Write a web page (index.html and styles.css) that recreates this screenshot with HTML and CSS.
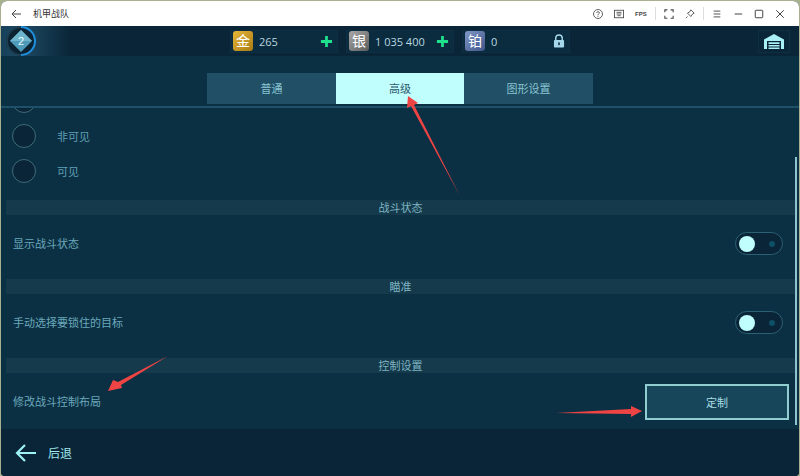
FILE: index.html
```html
<!DOCTYPE html>
<html lang="zh">
<head>
    <meta charset="UTF-8">
    <title>机甲战队</title>
    <link rel="stylesheet" href="styles.css">
</head>
<body>
    <div class="window">
        <header class="titlebar">
            <svg class="ico back" width="10" height="10" viewBox="0 0 10 10"><path d="M10 5H1M5 1 1 5l4 4" fill="none" stroke="#444" stroke-width="1"/></svg>
            <span class="title">机甲战队</span>
            <div class="win-tools">
                <svg class="ico" width="10" height="10" viewBox="0 0 12 12"><circle cx="6" cy="6" r="5.400" fill="none" stroke="#444"/><path d="M4.300 4.600C4.400 2.800 7.700 2.800 7.700 4.600 7.700 5.800 6 5.700 6 7.400M6 8.200v1.200" fill="none" stroke="#444"/></svg>
                <svg class="ico" width="10" height="10" viewBox="0 0 12 12"><rect x="0.500" y="1.500" width="11" height="9" fill="none" stroke="#444"/><path d="M3 4h6M3 6h6M4 8h4" stroke="#444"/></svg>
                <span class="fps">FPS</span>
                <i class="sep"></i>
                <svg class="ico" width="10" height="10" viewBox="0 0 12 12"><path d="M1 4V1h3M8 1h3v3M11 8v3H8M4 11H1V8" fill="none" stroke="#444" stroke-width="1.300"/></svg>
                <svg class="ico" width="10" height="10" viewBox="0 0 12 12"><path d="M7 1l4 4-2 1-2 3-4-4 3-2zM3 9l-2 2" fill="none" stroke="#444"/></svg>
                <i class="sep"></i>
                <svg class="ico" width="10" height="10" viewBox="0 0 12 12"><path d="M2 2.500h8M2 6h8M2 9.500h8" stroke="#444" stroke-width="1.100"/></svg>
                <svg class="ico" width="10" height="10" viewBox="0 0 12 12"><path d="M2 6h9" stroke="#444" stroke-width="1.200"/></svg>
                <svg class="ico" width="10" height="10" viewBox="0 0 12 12"><rect x="1.500" y="1.500" width="9" height="9" rx="1" fill="none" stroke="#444" stroke-width="1.200"/></svg>
                <svg class="ico" width="10" height="10" viewBox="0 0 12 12"><path d="M1.500 1.500l9 9M10.500 1.500l-9 9" stroke="#444" stroke-width="1.200"/></svg>
            </div>
        </header>

        <div class="topbar">
            <div class="level">
                <svg width="32" height="32" viewBox="0 0 32 32">
                    <circle cx="16" cy="16" r="14" fill="#0a2232" stroke="#1c3c50" stroke-width="2"/>
                    <path d="M16 2a14 14 0 0 1 0 28" fill="none" stroke="#1f8fe0" stroke-width="2"/>
                    <path d="M16 5 27 16 16 27 5 16z" fill="#4e9ab8"/>
                    <path d="M16 5 27 16H5z" fill="#6db4cc"/>
                </svg>
                <span class="level-num">2</span>
            </div>
            <div class="wallet">
                <div class="purse">
                    <span class="coin coin-gold">金</span>
                    <span class="amount">265</span>
                    <svg class="plus" width="13" height="13" viewBox="0 0 14 14"><path d="M7 1v12M1 7h12" stroke="#1fe08c" stroke-width="3"/></svg>
                </div>
                <div class="purse">
                    <span class="coin coin-silver">银</span>
                    <span class="amount">1 035 400</span>
                    <svg class="plus" width="13" height="13" viewBox="0 0 14 14"><path d="M7 1v12M1 7h12" stroke="#1fe08c" stroke-width="3"/></svg>
                </div>
                <div class="purse">
                    <span class="coin coin-plat">铂</span>
                    <span class="amount">0</span>
                    <svg class="plus" width="12" height="14" viewBox="0 0 13 15"><path d="M3 7V4.500a3.500 3.500 0 0 1 7 0V7" fill="none" stroke="#a5d8ea" stroke-width="1.600"/><rect x="1" y="6.500" width="11" height="8" rx="1" fill="#a5d8ea"/><rect x="5.700" y="9" width="1.600" height="3" fill="#0a2537"/></svg>
                </div>
            </div>
            <div class="hangar">
                <svg width="20" height="15" viewBox="0 0 20 15"><path d="M10 0 20 5.500V15h-3V7H3v8H0V5.500z" fill="#a8f0f6"/><path d="M4.500 8.200h11v1.800h-11zM4.500 11h11v1.600h-11zM4.500 13.400h11V15h-11z" fill="#a8f0f6"/></svg>
            </div>
        </div>

        <nav class="tabs">
            <a class="tab">普通</a>
            <a class="tab active">高级</a>
            <a class="tab">图形设置</a>
        </nav>

        <main class="content">
            <div class="radio-row first"><i class="radio"></i></div>
            <div class="radio-row"><i class="radio"></i><span>非可见</span></div>
            <div class="radio-row"><i class="radio"></i><span>可见</span></div>

            <h2 class="section first-section">战斗状态</h2>
            <div class="row">
                <span class="row-label">显示战斗状态</span>
                <div class="toggle"><i class="knob"></i><i class="dot"></i></div>
            </div>

            <h2 class="section">瞄准</h2>
            <div class="row">
                <span class="row-label">手动选择要锁住的目标</span>
                <div class="toggle"><i class="knob"></i><i class="dot"></i></div>
            </div>

            <h2 class="section">控制设置</h2>
            <div class="row row-button">
                <span class="row-label">修改战斗控制布局</span>
                <button class="custom-btn">定制</button>
            </div>
            <i class="scrollbar"></i>
        </main>

        <footer class="footer">
            <svg width="22" height="18" viewBox="0 0 22 18"><path d="M21 9H2M10 1 2 9l8 8" fill="none" stroke="#9ff2f6" stroke-width="2.200"/></svg>
            <span>后退</span>
        </footer>

        <!-- стрелки поверх скриншота -->
        <svg class="arrows" width="800" height="476" viewBox="0 0 800 476">
            <path d="M460 196 414 105 418 103 408 96 407 108 411 106z" fill="#ef4444"/>
            <path d="M168 356 118 382 113 380 108 391 122 388 121 385z" fill="#ef4444"/>
            <path d="M556 413 631 409 631 406 642 411 631 417 631 414z" fill="#ef4444"/>
        </svg>
    </div>
</body>
</html>
```

FILE: styles.css
```css
:root {
    --bg-dark: #0a2537;
    --bg-main: #0c3043;
    --text-dim: #5f9fb5;
    --cyan: #c0fdfd;
}

* {
    box-sizing: border-box;
}

html, body {
    margin: 0;
    height: 100%;
    background: #a9b08f;
    overflow: hidden;
}

body {
    font-family: "Noto Sans CJK SC", "Liberation Sans", sans-serif;
}

.window {
    position: relative;
    margin: 1px 1px 0;
    height: 475px;
    display: flex;
    flex-direction: column;
    background: var(--bg-main);
    border-radius: 6px 6px 4px 4px;
    overflow: hidden;
}

.titlebar {
    height: 25px;
    flex: none;
    background: #fff;
    display: flex;
    align-items: center;
    padding: 0 14px 0 10px;
}

.title {
    margin-left: 12px;
    font-size: 9px;
    color: #333;
}

.ico {
    display: block;
    flex: none;
}

.win-tools {
    margin-left: auto;
    display: flex;
    align-items: center;
    gap: 11px;
}

.fps {
    width: 12px;
    font: bold 6px "Liberation Sans", sans-serif;
    color: #444;
}

.sep {
    width: 1px;
    height: 13px;
    margin: 0 -3px;
    background: #ddd;
}

.topbar {
    height: 30px;
    flex: none;
    background: var(--bg-dark);
    display: flex;
    align-items: center;
    position: relative;
}

.level {
    position: relative;
    width: 70px;
    height: 100%;
    padding: 0 0 0 4px;
    display: flex;
    align-items: center;
    background: linear-gradient(90deg, #17405a 0, #1d4a64 30%, var(--bg-dark) 100%);
}

.level-num {
    position: absolute;
    left: 4px;
    width: 32px;
    text-align: center;
    font: 11px "Liberation Sans", sans-serif;
    color: #e8fbff;
}

.wallet {
    margin-left: 159px;
    display: flex;
    gap: 8px;
}

.purse {
    width: 108px;
    height: 23px;
    display: flex;
    align-items: center;
    padding: 0 2px;
    background: #0b2b3e;
    border: 1px solid #0e2f43;
    color: #cfe8ee;
}

.amount {
    margin-left: 6px;
    font: 11px "Open Sans", sans-serif;
    color: #b8d8e0;
}

.plus {
    margin-left: auto;
    margin-right: 2px;
}

.coin {
    width: 20px;
    height: 20px;
    flex: none;
    border-radius: 3px;
    text-align: center;
    font-size: 14px;
    line-height: 19px;
    color: #fff;
}

.coin-gold { background: linear-gradient(135deg, #e8b838, #a87a14); }
.coin-silver { background: linear-gradient(135deg, #a8a8a8, #5c5c5c); }
.coin-plat { background: linear-gradient(135deg, #8098c8, #3f5488); }

.hangar {
    margin-left: auto;
    margin-right: 9px;
    width: 32px;
    height: 23px;
    display: flex;
    align-items: center;
    justify-content: center;
    border: 1px solid #0e2f43;
}

.tabs {
    height: 52px;
    flex: none;
    display: flex;
    justify-content: center;
    align-items: flex-end;
    padding-bottom: 2px;
    border-bottom: 2px solid #1e5068;
}

.tab {
    width: 129px;
    height: 31px;
    padding-bottom: 2px;
    background: #215066;
    color: #89c4d2;
    font-size: 11px;
    display: flex;
    align-items: center;
    justify-content: center;
}

.tab.active {
    background: var(--cyan);
    color: #2d5a6c;
    width: 128px;
}

.content {
    position: relative;
    flex: 1;
    overflow: hidden;
    padding: 0 4px;
    font-size: 11px;
    color: var(--text-dim);
}

.radio-row {
    height: 35px;
    display: flex;
    align-items: center;
    padding-left: 7px;
    gap: 21px;
}

.radio-row.first {
    margin-top: -25px;
}

.radio {
    width: 24px;
    height: 24px;
    flex: none;
    border-radius: 50%;
    background: #0a2537;
    border: 1px solid #3e6c7a;
}

.section {
    margin: 0 0 0 1px;
    height: 15px;
    background: #143a4c;
    color: #7fb4c2;
    font-size: 11px;
    font-weight: normal;
    line-height: 15px;
    text-align: center;
}

.first-section {
    margin-top: 12px;
}

.row {
    height: 64px;
    display: flex;
    align-items: center;
    justify-content: space-between;
    padding: 0 12px 7px 8px;
    color: #6aa8bc;
}

.row-label {
    margin-bottom: 2px;
}

.row-button {
    padding-right: 6px;
}

.toggle {
    width: 48px;
    height: 23px;
    border-radius: 12px;
    background: #0a2537;
    border: 1px solid #2c6074;
    display: flex;
    align-items: center;
    justify-content: space-between;
    padding: 0 7px 0 3px;
}

.knob {
    width: 16px;
    height: 16px;
    border-radius: 50%;
    background: var(--cyan);
}

.dot {
    width: 6px;
    height: 6px;
    border-radius: 50%;
    background: #0d5068;
}

.custom-btn {
    width: 144px;
    height: 36px;
    flex: none;
    background: #17455a;
    border: 2px solid #8fcdd0;
    color: #a8dde2;
    font-family: inherit;
    font-size: 11px;
}

.scrollbar {
    position: absolute;
    right: 2px;
    top: 49px;
    width: 2px;
    height: 268px;
    background: #8ec4d0;
}

.footer {
    height: 47px;
    flex: none;
    background: var(--bg-dark);
    display: flex;
    align-items: center;
    gap: 11px;
    padding: 0 0 0 14px;
    color: #a0e8ee;
    font-size: 12px;
}

.arrows {
    position: absolute;
    left: -1px;
    top: -1px;
    pointer-events: none;
}
```
